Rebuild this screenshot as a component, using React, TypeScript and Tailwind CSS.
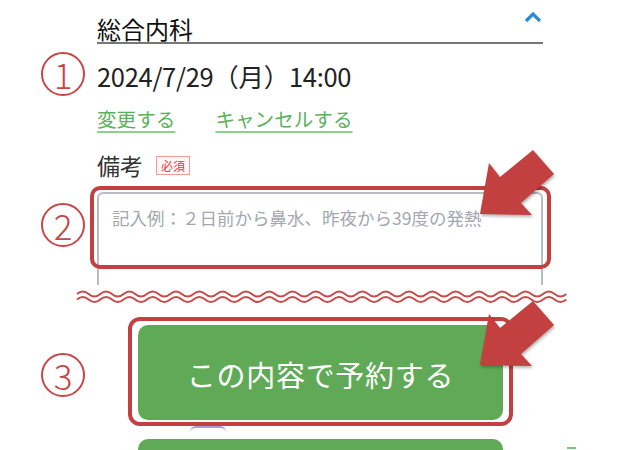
import React from "react";

function wavePath(x0: number, y: number, periods: number, w: number, a: number) {
  let d = `M${x0} ${y}`;
  for (let i = 0; i < periods; i++) {
    d += ` q${w / 4} ${-a} ${w / 2} 0 t${w / 2} 0`;
  }
  return d;
}

const RED = "#c2403f";

function Arrow({ dy }: { dy: number }) {
  const pts = [
    [480, 214],
    [489, 163],
    [500, 177],
    [533, 150],
    [554, 174],
    [521, 203],
    [532, 215],
  ]
    .map(([x, y]) => `${x},${y + dy}`)
    .join(" ");
  return <polygon points={pts} fill={RED} />;
}

function Circled({ n, top }: { n: string; top: string }) {
  return (
    <div
      className={`absolute left-[41px] ${top} w-[44px] h-[44px] rounded-full border-2 border-[#c94546] flex items-center justify-center text-[#c94546] text-[35px] font-light leading-none`}
    >
      <span className="mt-[-2px]">{n}</span>
    </div>
  );
}

export default function App() {
  return (
    <div className="relative w-[640px] h-[450px] overflow-hidden bg-white font-['Noto_Sans_CJK_JP',sans-serif]">
      <div className="ml-[97px] w-[446px]">
        {/* header */}
        <div className="flex justify-between items-start border-b-2 border-[#777]">
          <div className="pt-[16px] text-[24px] leading-[26px] text-[#111]">総合内科</div>
          <svg width="18" height="12" viewBox="0 0 18 12" className="mt-[11px] mr-[1px]">
            <polyline points="2,10 9,3 16,10" fill="none" stroke="#2b8bd3" strokeWidth="3.2" />
          </svg>
        </div>
        {/* date */}
        <div className="mt-[18px] text-[25.5px] leading-[28px] text-[#222] tracking-[-0.3px]">
          2024/7/29（月）14:00
        </div>
        {/* links */}
        <div className="mt-[17px] flex gap-[40px] text-[19.6px] leading-[24px] text-[#5cb25c]">
          <span className="underline decoration-[#8fcf8f] decoration-2 underline-offset-[4px]">変更する</span>
          <span className="underline decoration-[#8fcf8f] decoration-2 underline-offset-[4px]">キャンセルする</span>
        </div>
        {/* 備考 */}
        <div className="mt-[20px] flex items-center gap-[13px]">
          <span className="text-[23px] leading-[29px] text-[#333]">備考</span>
          <span className="border border-[#f29a9a] bg-[#fff7f7] text-[#e23b3b] text-[12px] leading-[15px] px-[4px] py-px">
            必須
          </span>
        </div>
        {/* textarea */}
        <div className="relative mt-[12px] h-[93px]">
          <div className="h-full overflow-hidden">
            <div className="h-[140px] border-2 border-[#b7bcc6] rounded-[6px] pl-[13px] pt-[12px] text-[17.5px] leading-[24px] text-[#a3a7ae]">
              記入例：２日前から鼻水、昨夜から39度の発熱
            </div>
          </div>
          <div className="absolute left-[-7px] top-[-6px] w-[461px] h-[83px] border-4 border-[#c2403f] rounded-[10px]" />
        </div>
      </div>

      {/* wave */}
      <svg width="492" height="16" viewBox="0 0 492 16" className="block ml-[76px] mt-[4px]">
        <path d={wavePath(1, 5, 21, 23.3, 5)} fill="none" stroke="#c94a4a" strokeWidth="2" />
        <path d={wavePath(1, 10.5, 21, 23.3, 5)} fill="none" stroke="#c94a4a" strokeWidth="2" />
      </svg>

      {/* primary button with frame */}
      <div className="ml-[128px] mt-[12px] w-[385px] border-4 border-[#c2403f] rounded-[12px] px-[6px] pt-[4px] pb-[2px]">
        <div className="h-[95px] rounded-[10px] bg-[#60aa57] flex items-center justify-center text-white text-[29px] tracking-[0.7px]">
          <span className="mt-[5px]">この内容で予約する</span>
        </div>
      </div>

      {/* second button */}
      <div className="ml-[138px] mt-[13px] w-[365px] h-[40px] rounded-[10px] bg-[#60aa57]" />

      {/* overlays */}
      <Circled n="1" top="top-[52px]" />
      <Circled n="2" top="top-[203px]" />
      <Circled n="3" top="top-[353px]" />

      <div className="absolute left-[190px] top-[426px] w-[36px] h-[6px] rounded-t-full border-t-2 border-[#8a6fd8] opacity-70" />
      <div className="absolute left-[567px] top-[447px] w-[9px] h-[2px] bg-[#7cc47c]" />

      <svg
        width="640"
        height="450"
        viewBox="0 0 640 450"
        className="absolute left-0 top-0 pointer-events-none drop-shadow-[1px_2px_1.5px_rgba(0,0,0,0.3)]"
      >
        <Arrow dy={0} />
        <Arrow dy={151} />
      </svg>
    </div>
  );
}
